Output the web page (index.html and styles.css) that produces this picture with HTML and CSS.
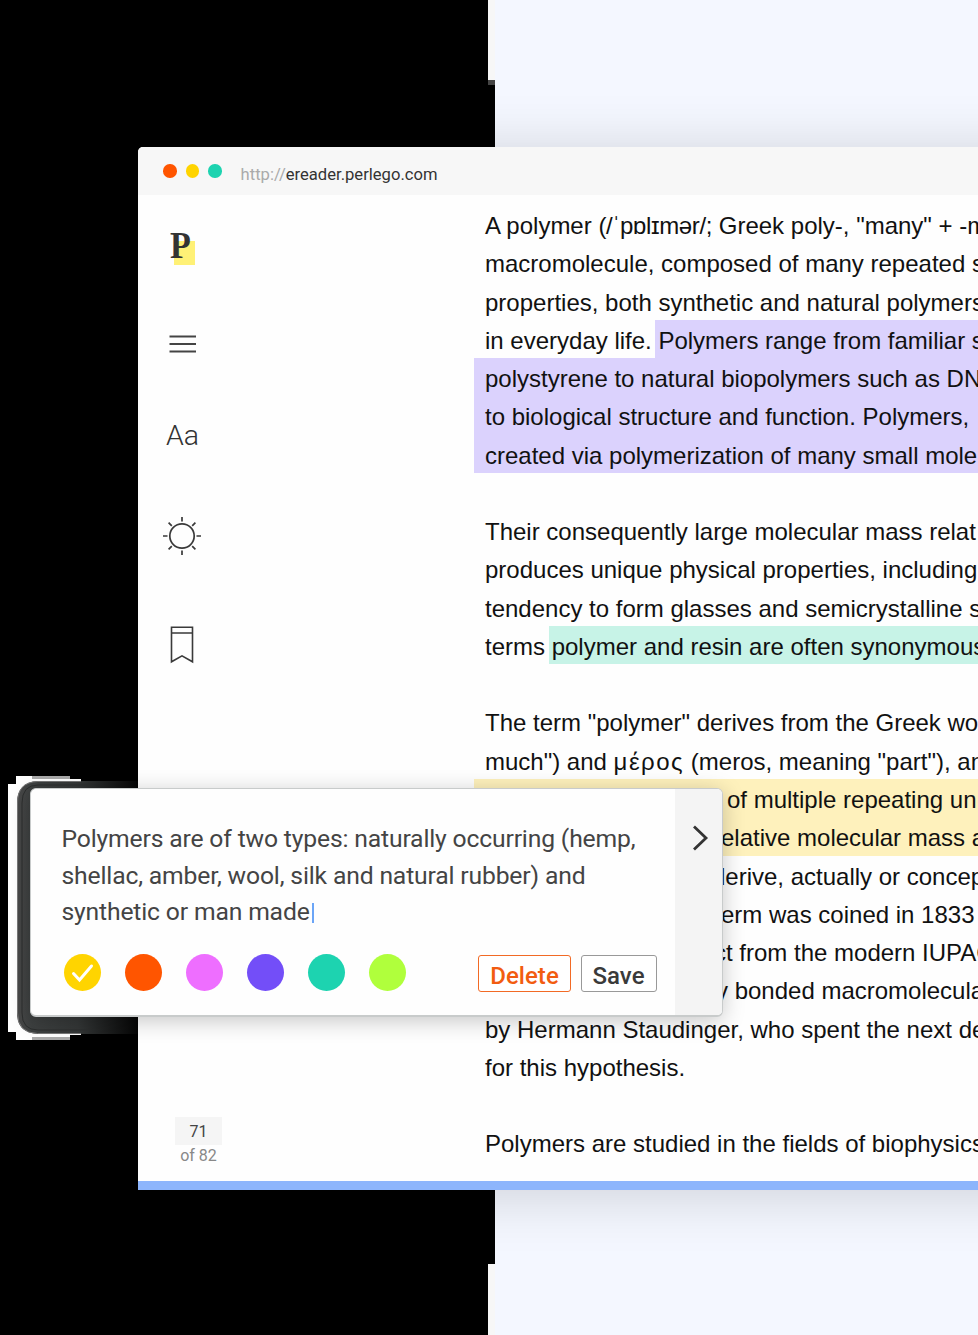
FILE: index.html
```html
<!DOCTYPE html>
<html lang="en">
<head>
<meta charset="utf-8">
<title>Perlego eReader</title>
<link rel="stylesheet" href="styles.css">
</head>
<body>
<div class="stage">
  <svg class="backdrop" width="978" height="1335" viewBox="0 0 978 1335">
    <rect width="978" height="1335" fill="#000"/>
    <rect x="495" width="483" height="1335" fill="#f4f7ff"/>
    <path d="M488 0h7v80h-7zM488 1264h7v71h-7z" fill="#f7f7f7"/>
    <path d="M488 80h7v5h-7z" fill="#444"/>
  </svg>
  <main class="window">
    <header class="bar">
      <i class="dot red"></i><i class="dot yellow"></i><i class="dot teal"></i>
      <p class="url"><span>http://</span>ereader.perlego.com</p>
    </header>
    <div class="body">
      <aside class="side">
        <div class="logo"><b>P</b></div>
        <svg class="menu" width="28" height="18" viewBox="0 0 28 18" stroke="#444" stroke-width="1.9"><path d="M.5 1.500h26.500M.5 9h26.500M.5 16.500h26.500"/></svg>
        <div class="aa">Aa</div>
        <svg class="sun" width="40" height="40" viewBox="-20 -20 40 40" fill="none" stroke="#3a3a3a" stroke-width="1.700"><circle r="12.200"/><path d="M0-19v4.500M0 19v-4.500M-19 0h4.500M19 0h-4.500M-13.400-13.400l3.200 3.200M13.400-13.400l-3.200 3.200M-13.400 13.400l3.200-3.200M13.400 13.400l-3.200-3.200"/></svg>
        <svg class="mark" width="24" height="38" viewBox="0 0 24 38" fill="none" stroke="#3a3a3a" stroke-width="1.600"><path d="M1.500 1.300h21v34.500l-10.500-6-10.500 6zM1.500 7h21"/></svg>
        <div class="pages"><span class="now">71</span><span class="all">of 82</span></div>
      </aside>
      <article class="text">
        <p>A polymer <span class="ipa">(/ˈpɒlɪmər/;</span> Greek poly-, "many" + -m</p>
        <p>macromolecule, composed of many repeated s</p>
        <p>properties, both synthetic and natural polymers</p>
        <p>in everyday life. <mark class="violet">Polymers range from familiar s</mark></p>
        <p class="violet">polystyrene to natural biopolymers such as DN</p>
        <p class="violet">to biological structure and function. Polymers,</p>
        <p class="violet">created via polymerization of many small mole</p>
        <p class="gap"></p>
        <p>Their consequently large molecular mass relat</p>
        <p>produces unique physical properties, including</p>
        <p>tendency to form glasses and semicrystalline s</p>
        <p>terms <mark class="mint">polymer and resin are often synonymous</mark></p>
        <p class="gap"></p>
        <p>The term "polymer" derives from the Greek wo</p>
        <p>much") and <span class="greek">μέρος</span> (meros, meaning "part"), an</p>
        <p class="sand in-of">of multiple repeating un</p>
        <p class="sand in-rel">elative molecular mass a</p>
        <p class="in-der">derive, actually or concep</p>
        <p class="in-erm">erm was coined in 1833</p>
        <p class="in-ct">ct from the modern IUPAC</p>
        <p class="in-y">y bonded macromolecula</p>
        <p>by Hermann Staudinger, who spent the next de</p>
        <p>for this hypothesis.</p>
        <p class="gap"></p>
        <p>Polymers are studied in the fields of biophysics</p>
      </article>
    </div>
  </main>
  <svg class="halo" width="130" height="264" viewBox="0 0 130 264">
    <defs>
      <linearGradient id="fade" x1="0" x2="1"><stop offset="0" stop-color="#484848"/><stop offset=".12" stop-color="#3d4040"/><stop offset=".5" stop-color="#343737"/><stop offset="1" stop-color="#050505"/></linearGradient>
    </defs>
    <path d="M0 8h8V0h54v3h11v3h-50v250h50v3h-11v5H8v-8H0z" fill="#fff"/>
    <path d="M24 0h38v3H24zM24 261h38v3H24z" fill="#aaa"/>
    <path d="M130 5H30Q9 6 9 27v210q0 20 21 21h100z" fill="url(#fade)"/>
    <path d="M73 5.500H30Q9.500 6 9.500 27v210q0 20 20 20.500H73" fill="none" stroke="#777" stroke-width="1"/>
    <path d="M80 9H30Q14 9 14 27v210q0 17 16 17h50" fill="none" stroke="#2c2e2e" stroke-width="1"/>
  </svg>
  <section class="card">
    <div class="note">
      <div class="copy"><p>Polymers are of two types: naturally occurring (hemp,</p><p>shellac, amber, wool, silk and natural rubber) and</p><p>synthetic or man made<i class="caret"></i></p></div>
      <div class="tools">
        <i class="sw s1"><svg width="37" height="37" viewBox="0 0 37 37" fill="none" stroke="#fff" stroke-width="3" stroke-linecap="round"><path d="M9.500 19.500l6 6.500 12-14"/></svg></i><i class="sw s2"></i><i class="sw s3"></i><i class="sw s4"></i><i class="sw s5"></i><i class="sw s6"></i>
        <button class="btn del">Delete</button><button class="btn save">Save</button>
      </div>
    </div>
    <div class="next"><svg width="18" height="28" viewBox="0 0 18 28" fill="none" stroke="#333" stroke-width="2.800"><path d="M2 2.500l12 11.500-12 11.500"/></svg></div>
  </section>
</div>
</body>
</html>
```

FILE: styles.css
```css
* { box-sizing: border-box; }
body { margin: 0; font-family: "Liberation Sans", sans-serif; }
p { margin: 0; }
.stage { position: relative; width: 978px; height: 1335px; overflow: hidden; padding: 147px 0 0 138px; }
.backdrop { position: absolute; left: 0; top: 0; }
.window { position: relative; width: 1000px; height: 1043px; background: #fefefe; border-bottom: 9px solid #8db5fc; border-radius: 5px 0 0 0; box-shadow: 0 5px 60px rgba(0,0,0,.16); }
.bar { height: 48px; background: #f7f7f7; border-radius: 5px 0 0 0; display: flex; align-items: center; padding-left: 25px; }
.dot { width: 13.500px; height: 13.500px; border-radius: 50%; margin: 0 9.200px 0 0; }
.red { background: #ff5500; }
.yellow { background: #ffd400; }
.teal { background: #1dd3b0; }
.url { font: 16.600px/24px Roboto, sans-serif; color: #333; padding: 7px 0 0 9.500px; white-space: nowrap; }
.url span { color: #aaa; }
.body { display: flex; height: 986px; }
.side { flex: none; width: 336px; padding: 35px 0 0 25px; display: flex; flex-direction: column; align-items: flex-start; }
.logo { width: 21px; height: 24px; margin: 11px 0 0 11px; background: #fff176; }
.logo b { display: block; font: bold 37px/37px "Liberation Serif", serif; color: #333; margin: -14px 0 0 -4px; transform: scaleX(.92); transform-origin: left; }
.menu { margin: 70px 0 0 6px; }
.aa { font: 300 28.500px/34px Roboto, sans-serif; color: #333; margin: 66px 0 0 3px; }
.sun { margin: 63px 0 0 -1px; }
.mark { margin: 70px 0 0 7px; }
.pages { margin: auto 0 14px 12px; width: 47px; display: flex; flex-direction: column; text-align: center; font: 16px/22px Roboto, sans-serif; }
.now { background: #f5f5f5; color: #444; height: 28px; line-height: 29px; }
.all { color: #888; }
.text { flex: 1; padding-top: 10px; font-size: 24px; color: #111; white-space: nowrap; }
.text p { height: 38.270px; line-height: 41.600px; padding-left: 11px; }
.violet { background: #dbd2fd; }
.mint { background: #c7f3e7; }
.sand { background: #fef1bc; }
.text mark { display: inline-block; height: 38.270px; color: inherit; margin-left: -3px; padding-left: 3px; vertical-align: top; }
.ipa { letter-spacing: -.35px; }
.greek { letter-spacing: 1.500px; }
.text .in-of { padding-left: 253px; }
.text .in-rel { padding-left: 247px; }
.text .in-der { padding-left: 238px; }
.text .in-erm { padding-left: 247px; }
.text .in-ct { padding-left: 240px; }
.text .in-y { padding-left: 242px; }
.halo { position: absolute; left: 8px; top: 776px; }
.card { position: absolute; left: 30px; top: 788px; width: 693px; height: 229px; display: flex; background: #fefefe; border: 1px solid #c8cbcb; border-width: 1px 1px 2px; border-radius: 6px; box-shadow: 0 4px 22px rgba(0,0,0,.22); overflow: hidden; }
.note { flex: none; width: 644px; padding: 32px 0 0 30.500px; }
.copy { font: 24.700px/36.600px Roboto, sans-serif; letter-spacing: -.16px; color: #444; white-space: nowrap; }
.caret { display: inline-block; width: 2px; height: 20px; background: #6ba5f7; vertical-align: -3px; margin-left: 2px; }
.tools { display: flex; align-items: center; margin: 22.500px 0 0 2.500px; }
.sw { flex: none; width: 37px; height: 37px; border-radius: 50%; margin-right: 24px; }
.s1 { background: #ffd400; } .s2 { background: #ff5500; } .s3 { background: #ee6eff; }
.s4 { background: #734ef8; } .s5 { background: #1dd3b0; } .s6 { background: #b0ff3c; }
.btn { flex: none; height: 37px; margin-top: 2px; padding: 4px 0 0; border-radius: 3px; background: #fff; font: 500 24px/30px Roboto, sans-serif; letter-spacing: .05px; }
.del { width: 93px; margin-left: 48px; border: 1.500px solid #f26a25; color: #f25c10; }
.save { width: 76px; margin-left: 9.500px; border: 1.500px solid #999; color: #3a3a3a; }
.next { flex: 1; background: #f4f4f4; padding: 35px 0 0 16.500px; }
```
